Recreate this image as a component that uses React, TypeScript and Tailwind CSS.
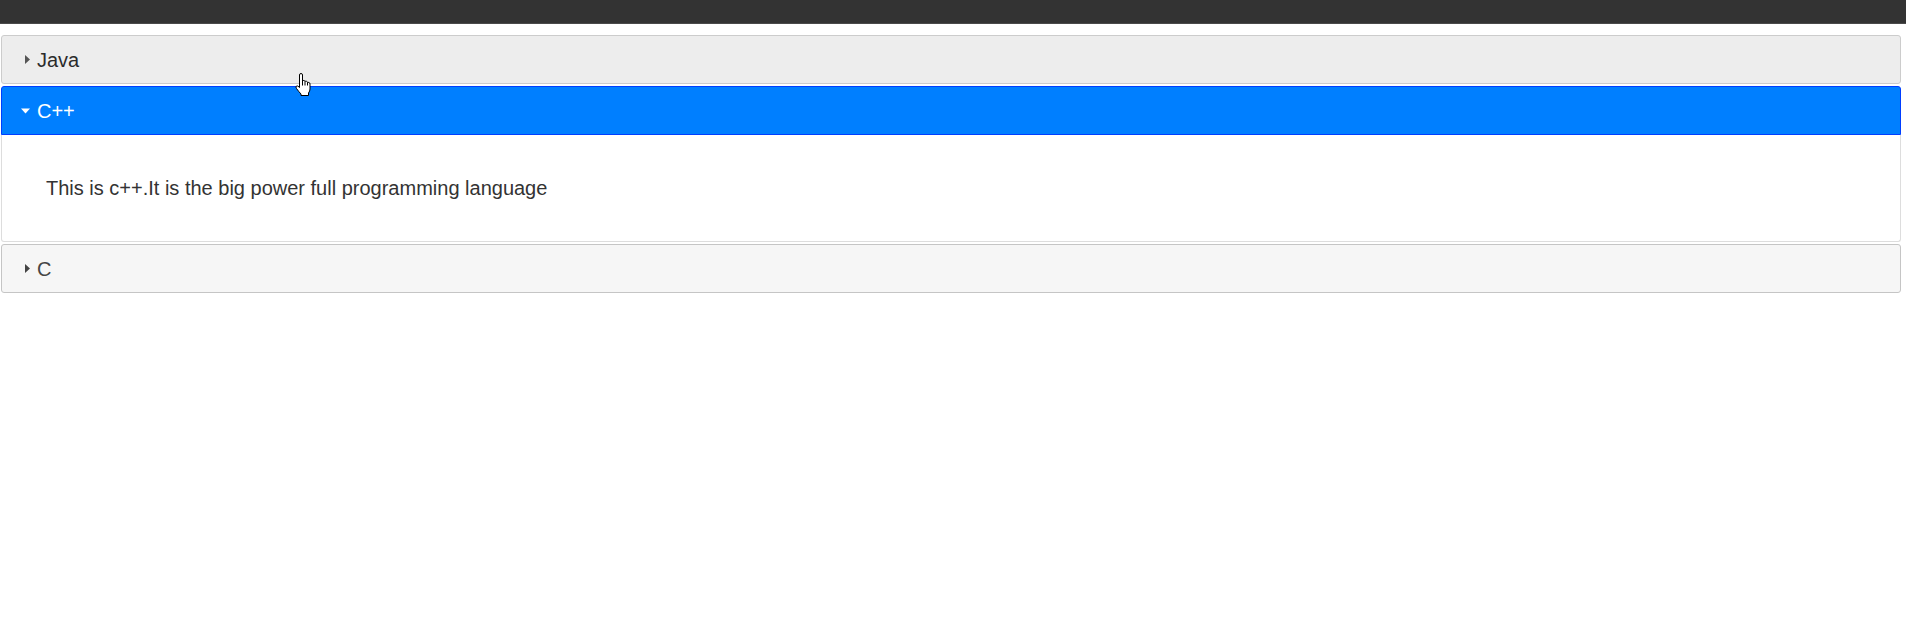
import React from "react";

const font = { fontFamily: '"Liberation Sans", Arial, sans-serif' };

function TriRight({ color }: { color: string }) {
  return (
    <svg width="19" height="19" viewBox="0 0 19 19" className="shrink-0">
      <path d="M7 5 L12 9.5 L7 14 Z" fill={color} />
    </svg>
  );
}

function TriDown({ color }: { color: string }) {
  return (
    <svg width="19" height="19" viewBox="0 0 19 19" className="shrink-0">
      <path d="M3 7.5 L12 7.5 L7.5 12.5 Z" fill={color} />
    </svg>
  );
}

function HandCursor() {
  return (
    <svg
      width="17"
      height="24"
      viewBox="0 0 17 24"
      className="absolute pointer-events-none"
      style={{ left: 295, top: 73 }}
    >
      <path
        d="M4.5 2 Q4.5 0.5 6 0.5 Q7.5 0.5 7.5 2 V8 Q8 7.3 9 7.5 Q10 7.7 10 8.5 Q10.5 8 11.5 8.3 Q12.5 8.6 12.5 9.5 Q13 9.2 14 9.5 Q15 9.8 15 11 V16 Q15 18 13.5 20 V22.5 H6 V21 Q4 19 1.5 15.5 Q0.3 13.8 1.5 13 Q2.7 12.3 4.5 14.5 Z"
        fill="#fff"
        stroke="#000"
        strokeWidth="1"
        strokeLinejoin="round"
      />
      <path d="M7.5 8 V12.5 M10 8.5 V12.5 M12.5 9.5 V12.5" stroke="#000" strokeWidth="1" fill="none" />
    </svg>
  );
}

export default function App() {
  return (
    <div className="relative min-h-[632px] bg-white" style={font}>
      <div className="h-[24px] bg-[#333333] border-b border-[#4a4a4a]" />
      <div className="ml-[1px] mr-[5px] mt-[11px] text-[20px] leading-[28px]">
        <div className="flex items-center h-[49px] pl-[16px] bg-[#ededed] border border-[#cccccc] rounded-[3px] text-[#2b2b2b]">
          <TriRight color="#555555" />
          <span>Java</span>
        </div>
        <div className="mt-[2px] flex items-center h-[49px] pl-[16px] bg-[#007fff] border border-[#003eff] rounded-t-[3px] text-white">
          <TriDown color="#ffffff" />
          <span>C++</span>
        </div>
        <div className="h-[107px] bg-white border border-t-0 border-[#dddddd] rounded-b-[3px] pl-[44px] pt-[39px] text-[#333333]">
          <p>This is c++.It is the big power full programming language</p>
        </div>
        <div className="mt-[2px] flex items-center h-[49px] pl-[16px] bg-[#f6f6f6] border border-[#c5c5c5] rounded-[3px] text-[#454545]">
          <TriRight color="#444444" />
          <span>C</span>
        </div>
      </div>
      <HandCursor />
    </div>
  );
}
